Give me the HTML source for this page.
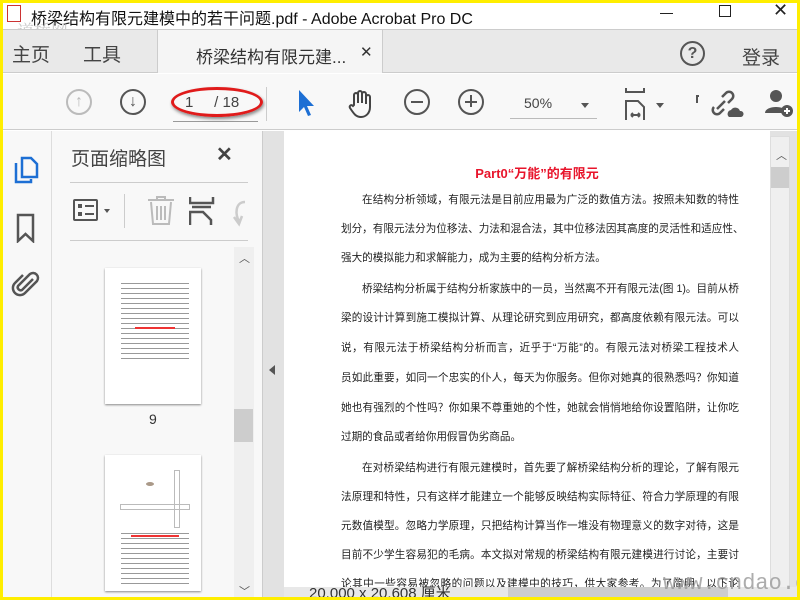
<!DOCTYPE html>
<html><head><meta charset="utf-8"><style>
*{margin:0;padding:0;box-sizing:border-box}
body{width:800px;height:600px;overflow:hidden;background:#ffee00;font-family:"Liberation Sans","Noto Sans CJK SC",sans-serif;position:relative}
.a{position:absolute}
#frame{left:3px;top:3px;width:794px;height:594px;background:#fff;overflow:hidden}
.ln{position:absolute;left:338px;width:398px;font-size:10.6px;color:#222;text-align:justify;text-align-last:justify;white-space:nowrap;line-height:14px;overflow:hidden}
svg{position:absolute}
</style></head><body>
<div id="frame" class="a">
<div class="a" style="left:0;top:0;width:794px;height:26px;background:#fff"></div>
<div class="a" style="left:4px;top:2px;width:14px;height:17px;border:1px solid #c33;background:#fff"></div>
<div class="a" style="left:28px;top:2px;font-size:16px;color:#111;white-space:nowrap">桥梁结构有限元建模中的若干问题.pdf - Adobe Acrobat Pro DC</div>
<div class="a" style="left:14px;top:14px;font-size:17px;color:#aaa;font-family:'Noto Serif CJK SC',serif;opacity:.6">道桥网</div>
<div class="a" style="left:657px;top:10px;width:13px;height:1px;background:#222"></div>
<div class="a" style="left:716px;top:2px;width:12px;height:12px;border:1px solid #222"></div>
<div class="a" style="left:770px;top:-3px;font-size:18px;color:#222">✕</div>
<div class="a" style="left:0;top:26px;width:794px;height:44px;background:#e9e9e9;border-top:1px solid #ccc;border-bottom:1px solid #ccc"></div>
<div class="a" style="left:154px;top:27px;width:226px;height:43px;background:#f5f5f5;border-left:1px solid #ccc;border-right:1px solid #ccc"></div>
<div class="a" style="left:9px;top:37px;font-size:19px;color:#444">主页</div>
<div class="a" style="left:80px;top:37px;font-size:19px;color:#444">工具</div>
<div class="a" style="left:193px;top:40px;font-size:17px;color:#333">桥梁结构有限元建...</div>
<div class="a" style="left:357px;top:40px;font-size:15px;color:#333">✕</div>
<div class="a" style="left:677px;top:38px;width:25px;height:25px;border:2px solid #555;border-radius:50%;text-align:center;font-size:16px;font-weight:bold;line-height:21px;color:#555">?</div>
<div class="a" style="left:739px;top:40px;font-size:19px;color:#444">登录</div>
<div class="a" style="left:0;top:71px;width:794px;height:56px;background:#f8f8f8;border-bottom:1px solid #ccc"></div>
<div class="a" style="left:63px;top:86px;width:26px;height:26px;border:2px solid #bbb;border-radius:50%;text-align:center;color:#bbb;font-size:16px;font-weight:bold;line-height:22px">↑</div>
<div class="a" style="left:117px;top:86px;width:26px;height:26px;border:2px solid #555;border-radius:50%;text-align:center;color:#555;font-size:16px;font-weight:bold;line-height:22px">↓</div>
<div class="a" style="left:170px;top:118px;width:85px;height:1px;background:#999"></div>
<div class="a" style="left:168px;top:84px;width:92px;height:30px;border:3px solid #e01b1b;border-radius:50%;box-shadow:1px 2px 3px #888"></div>
<div class="a" style="left:182px;top:91px;font-size:15px;color:#444">1&nbsp;&nbsp;&nbsp;&nbsp;&nbsp;/ 18</div>
<div class="a" style="left:263px;top:84px;width:1px;height:34px;background:#ccc"></div>
<svg style="left:293px;top:86px" width="24" height="30" viewBox="0 0 24 30"><path d="M3 1 L3 23 L8 18 L12 27 L15 26 L11 17 L18 17 Z" fill="#1d6fd4"/></svg>
<svg style="left:343px;top:86px" width="30" height="30" viewBox="0 0 30 30"><path d="M8 16 V6 a2 2 0 0 1 4 0 V14 V4 a2 2 0 0 1 4 0 V14 V5 a2 2 0 0 1 4 0 V15 V8 a2 2 0 0 1 4 0 V18 C24 24 20 28 15 28 C10 28 8 25 4 19 C3 17 5 15 7 17 Z" fill="none" stroke="#444" stroke-width="2"/></svg>
<div class="a" style="left:401px;top:86px;width:26px;height:26px;border:2px solid #555;border-radius:50%"></div>
<div class="a" style="left:408px;top:98px;width:12px;height:2px;background:#555"></div>
<div class="a" style="left:455px;top:86px;width:26px;height:26px;border:2px solid #555;border-radius:50%"></div>
<div class="a" style="left:462px;top:98px;width:12px;height:2px;background:#555"></div>
<div class="a" style="left:467px;top:92px;width:2px;height:12px;background:#555"></div>
<div class="a" style="left:521px;top:92px;font-size:14px;color:#444">50%</div>
<div class="a" style="left:507px;top:115px;width:87px;height:1px;background:#bbb"></div>
<div class="a" style="left:578px;top:100px;border:4px solid transparent;border-top:5px solid #555"></div>
<svg style="left:620px;top:84px" width="30" height="34" viewBox="0 0 30 34"><path d="M3 1 V5 H21 V1 M3 33 V14 H15 L21 20 V33 M8 28 H17 M8 28 l2 -2 M8 28 l2 2 M17 28 l-2 -2 M17 28 l-2 2" fill="none" stroke="#555" stroke-width="2"/></svg>
<div class="a" style="left:653px;top:100px;border:4px solid transparent;border-top:5px solid #555"></div>
<div class="a" style="left:693px;top:92px;width:3px;height:8px;border-left:2px solid #555;border-top:2px solid #555"></div>
<svg style="left:708px;top:86px" width="34" height="30" viewBox="0 0 34 30"><path d="M6 20 l8 -8 M3 18 a4 4 0 0 0 6 6 l4 -4 M17 14 l4 -4 a4 4 0 0 0 -6 -6 l-4 4" fill="none" stroke="#555" stroke-width="2.5"/><path d="M18 28 a4 4 0 0 1 2 -7 a5 5 0 0 1 9 1 a3 3 0 0 1 1 6 Z" fill="#555"/></svg>
<svg style="left:762px;top:86px" width="32" height="30" viewBox="0 0 32 30"><circle cx="11" cy="7" r="6" fill="#555"/><path d="M0 24 C0 16 22 16 22 24 Z" fill="#555"/><circle cx="22" cy="22" r="6" fill="#555"/><path d="M19 22 H25 M22 19 V25" stroke="#fff" stroke-width="2"/></svg>
<div class="a" style="left:0;top:128px;width:49px;height:466px;background:#f8f8f8;border-right:1px solid #ddd"></div>
<svg style="left:10px;top:152px" width="28" height="30" viewBox="0 0 28 30"><path d="M9 3 H18 L24 9 V22 H9 Z M3 8 V27 H18 V24" fill="none" stroke="#1d6fd4" stroke-width="2.5"/></svg>
<svg style="left:12px;top:210px" width="22" height="30" viewBox="0 0 22 30"><path d="M3 2 H18 V28 L10.5 21 L3 28 Z" fill="none" stroke="#555" stroke-width="2.5"/></svg>
<svg style="left:8px;top:266px" width="30" height="30" viewBox="0 0 30 30"><path d="M22 10 L11 21 a3 3 0 0 1 -4 -4 L19 5 a5 5 0 0 1 7 7 L14 24 a7 7 0 0 1 -10 -10 L12 6" fill="none" stroke="#555" stroke-width="2.5"/></svg>
<div class="a" style="left:49px;top:128px;width:210px;height:466px;background:#f8f8f8"></div>
<div class="a" style="left:68px;top:141px;font-size:19px;color:#444">页面缩略图</div>
<div class="a" style="left:213px;top:139px;font-size:20px;color:#444;font-weight:bold">✕</div>
<div class="a" style="left:67px;top:179px;width:178px;height:1px;background:#ccc"></div>
<div class="a" style="left:70px;top:196px;width:25px;height:22px;border:2px solid #555;border-radius:2px"></div>
<div class="a" style="left:75px;top:201px;width:4px;height:4px;background:#555"></div>
<div class="a" style="left:75px;top:209px;width:4px;height:4px;background:#555"></div>
<div class="a" style="left:82px;top:202px;width:9px;height:2px;background:#555"></div>
<div class="a" style="left:82px;top:210px;width:9px;height:2px;background:#555"></div>
<div class="a" style="left:101px;top:206px;border:3px solid transparent;border-top:4px solid #555"></div>
<div class="a" style="left:121px;top:191px;width:1px;height:34px;background:#ccc"></div>
<svg style="left:144px;top:193px" width="28" height="30" viewBox="0 0 28 30"><path d="M1 4 H27 M10 4 V1 H18 V4 M4 6 L6 28 H22 L24 6 M10 10 V24 M14 10 V24 M18 10 V24" fill="none" stroke="#bbb" stroke-width="2"/></svg>
<svg style="left:186px;top:193px" width="26" height="30" viewBox="0 0 26 30"><path d="M1 1 V7 H24 V1 M3 11 H22 M1 29 V16 H14 L22 24 V29" fill="none" stroke="#555" stroke-width="2.5"/></svg>
<svg style="left:228px;top:196px" width="16" height="28" viewBox="0 0 16 28"><path d="M14 3 C4 3 4 16 8 22 M3 18 L8 25 L11 17" fill="none" stroke="#ccc" stroke-width="2.5"/></svg>
<div class="a" style="left:67px;top:237px;width:178px;height:1px;background:#ccc"></div>
<div class="a" style="left:102px;top:265px;width:96px;height:136px;background:#fff;box-shadow:0 1px 2px #888"></div>
<div class="a" style="left:118px;top:278px;width:68px;height:80px;background:repeating-linear-gradient(#fff 0,#fff 2px,#777 2px,#777 3px,#fff 3px,#fff 5px);opacity:.75"></div>
<div class="a" style="left:132px;top:324px;width:40px;height:2px;background:#e33"></div>
<div class="a" style="left:146px;top:408px;font-size:14px;color:#333">9</div>
<div class="a" style="left:102px;top:452px;width:96px;height:136px;background:#fff;box-shadow:0 1px 2px #888"></div>
<div class="a" style="left:117px;top:501px;width:70px;height:6px;border:1px solid #bbb"></div>
<div class="a" style="left:171px;top:467px;width:6px;height:58px;border:1px solid #bbb"></div>
<div class="a" style="left:143px;top:479px;width:8px;height:4px;background:#a98;border-radius:50%"></div>
<div class="a" style="left:118px;top:528px;width:68px;height:56px;background:repeating-linear-gradient(#fff 0,#fff 2px,#777 2px,#777 3px,#fff 3px,#fff 5px);opacity:.75"></div>
<div class="a" style="left:128px;top:532px;width:48px;height:2px;background:#e33"></div>
<div class="a" style="left:231px;top:244px;width:20px;height:350px;background:#efefef"></div>
<div class="a" style="left:231px;top:406px;width:19px;height:33px;background:#cdcdcd"></div>
<div class="a" style="left:236px;top:247px;font-size:11px;color:#555">︿</div>
<div class="a" style="left:236px;top:580px;font-size:11px;color:#555">﹀</div>
<div class="a" style="left:259px;top:128px;width:22px;height:466px;background:#e2e2e2;border-left:1px solid #ccc"></div>
<div class="a" style="left:266px;top:362px;border:5px solid transparent;border-right:6px solid #555;border-left:0"></div>
<div class="a" style="left:281px;top:128px;width:486px;height:456px;background:#fff"></div>
<div class="a" style="left:281px;top:160px;width:506px;text-align:center;font-size:13px;font-weight:bold;color:#e8142b">Part0“万能”的有限元</div>
<div class="ln" style="top:190px;left:359px;width:377px">在结构分析领域，有限元法是目前应用最为广泛的数值方法。按照未知数的特性</div>
<div class="ln" style="top:219px">划分，有限元法分为位移法、力法和混合法，其中位移法因其高度的灵活性和适应性、</div>
<div class="ln" style="top:248px;text-align-last:left">强大的模拟能力和求解能力，成为主要的结构分析方法。</div>
<div class="ln" style="top:279px;left:359px;width:377px">桥梁结构分析属于结构分析家族中的一员，当然离不开有限元法(图 1)。目前从桥</div>
<div class="ln" style="top:308px">梁的设计计算到施工模拟计算、从理论研究到应用研究，都高度依赖有限元法。可以</div>
<div class="ln" style="top:338px">说，有限元法于桥梁结构分析而言，近乎于“万能”的。有限元法对桥梁工程技术人</div>
<div class="ln" style="top:368px">员如此重要，如同一个忠实的仆人，每天为你服务。但你对她真的很熟悉吗？你知道</div>
<div class="ln" style="top:398px">她也有强烈的个性吗？你如果不尊重她的个性，她就会悄悄地给你设置陷阱，让你吃</div>
<div class="ln" style="top:427px;text-align-last:left">过期的食品或者给你用假冒伪劣商品。</div>
<div class="ln" style="top:458px;left:359px;width:377px">在对桥梁结构进行有限元建模时，首先要了解桥梁结构分析的理论，了解有限元</div>
<div class="ln" style="top:487px">法原理和特性，只有这样才能建立一个能够反映结构实际特征、符合力学原理的有限</div>
<div class="ln" style="top:516px">元数值模型。忽略力学原理，只把结构计算当作一堆没有物理意义的数字对待，这是</div>
<div class="ln" style="top:545px">目前不少学生容易犯的毛病。本文拟对常规的桥梁结构有限元建模进行讨论，主要讨</div>
<div class="ln" style="top:574px">论其中一些容易被忽略的问题以及建模中的技巧，供大家参考。为了简明，以下论</div>
<div class="a" style="left:767px;top:128px;width:27px;height:466px;background:#e2e2e2"></div>
<div class="a" style="left:767px;top:133px;width:20px;height:455px;background:#efefef;border:1px solid #ddd"></div>
<div class="a" style="left:768px;top:164px;width:18px;height:21px;background:#cdcdcd"></div>
<div class="a" style="left:773px;top:144px;font-size:11px;color:#555">︿</div>
<div class="a" style="left:281px;top:584px;width:513px;height:10px;background:#e8e8e8"></div>
<div class="a" style="left:306px;top:582px;font-size:15px;color:#333;height:12px;overflow:hidden;line-height:18px">20.000 x 20.608 厘米</div>
<div class="a" style="left:505px;top:584px;width:220px;height:10px;background:#cdcdcd"></div>
<div class="a" style="left:660px;top:568px;font-size:22px;color:#999;opacity:.8;font-family:'Liberation Mono',monospace">www.cndao.com</div>
</div>
</body></html>
